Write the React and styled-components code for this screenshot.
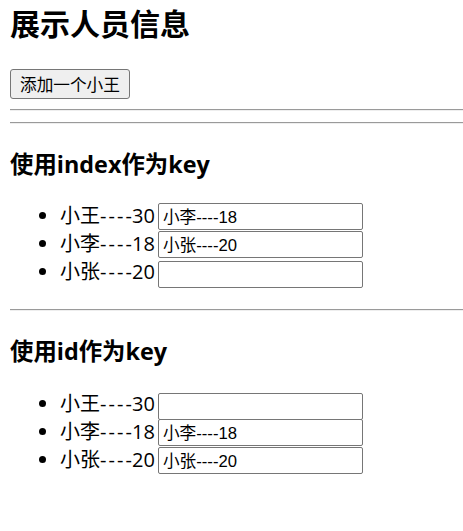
import React, { useState } from 'react'
import styled, { createGlobalStyle } from 'styled-components'

const GlobalStyle = createGlobalStyle`
  html, body {
    margin: 0;
    padding: 0;
    background: #fff;
  }
  body {
    padding-left: 10px;
    font-family: "Open Sans", "Noto Sans CJK SC", sans-serif;
    color: #000;
  }
`

const Title = styled.h2`
  margin: 4px 0 25px;
  font-size: 30px;
  line-height: 40px;
  font-weight: 700;
`

const AddButton = styled.button`
  display: block;
  height: 30px;
  padding: 0 9px;
  margin: 0;
  font-family: "Liberation Sans", "Noto Sans CJK SC", sans-serif;
  font-size: 16.67px;
  color: #000;
  background: #efefef;
  border: 1px solid #767676;
  border-radius: 3px;
`

const Rule = styled.hr`
  height: 0;
  margin: ${props => props.$top}px 0 11px;
  border: 0;
  border-top: 1px solid #9a9a9a;
  border-bottom: 1px solid #eeeeee;
`

const SubTitle = styled.h3`
  margin: 25px 0 0;
  font-size: 23.4px;
  line-height: 31px;
  font-weight: 700;
`

const List = styled.ul`
  margin: ${props => props.$top}px 0 0;
  padding-left: 50px;
  list-style: disc;
`

const Item = styled.li`
  height: 28px;
  font-size: 20px;
  line-height: 28px;
  white-space: nowrap;
`

const Dashes = styled.span`
  letter-spacing: 2.1px;
  margin-right: -2.1px;
`

const Age = styled.span`
  margin-right: 3px;
`

const NameInput = styled.input`
  box-sizing: border-box;
  width: 205px;
  height: 27px;
  margin: 0;
  padding: 0 4px;
  vertical-align: baseline;
  font-family: "Liberation Sans", "Noto Sans CJK SC", sans-serif;
  font-size: 16.67px;
  color: #000;
  border: 1px solid #767676;
  border-radius: 2px;
  outline: none;
`

const people = [
  { id: '001', name: '小王', age: 30 },
  { id: '002', name: '小李', age: 18 },
  { id: '003', name: '小张', age: 20 }
]

// what the inputs hold after the add: index keys shift them, id keys don't
const indexInputs = ['小李----18', '小张----20', '']
const idInputs = ['', '小李----18', '小张----20']

const PersonList = ({ values, top }) => (
  <List $top={top}>
    {people.map((p, i) => (
      <Item key={p.id}>
        {p.name}<Dashes>----</Dashes><Age>{p.age}</Age>
        <NameInput defaultValue={values[i]} />
      </Item>
    ))}
  </List>
)

export default function App() {
  const [count, setCount] = useState(0)
  return (
    <>
      <GlobalStyle />
      <Title>展示人员信息</Title>
      <AddButton onClick={() => setCount(count + 1)}>添加一个小王</AddButton>
      <Rule $top={10} />
      <Rule $top={0} />
      <SubTitle>使用index作为key</SubTitle>
      <PersonList values={indexInputs} top={22} />
      <Rule $top={23} />
      <SubTitle>使用id作为key</SubTitle>
      <PersonList values={idInputs} top={23} />
    </>
  )
}
